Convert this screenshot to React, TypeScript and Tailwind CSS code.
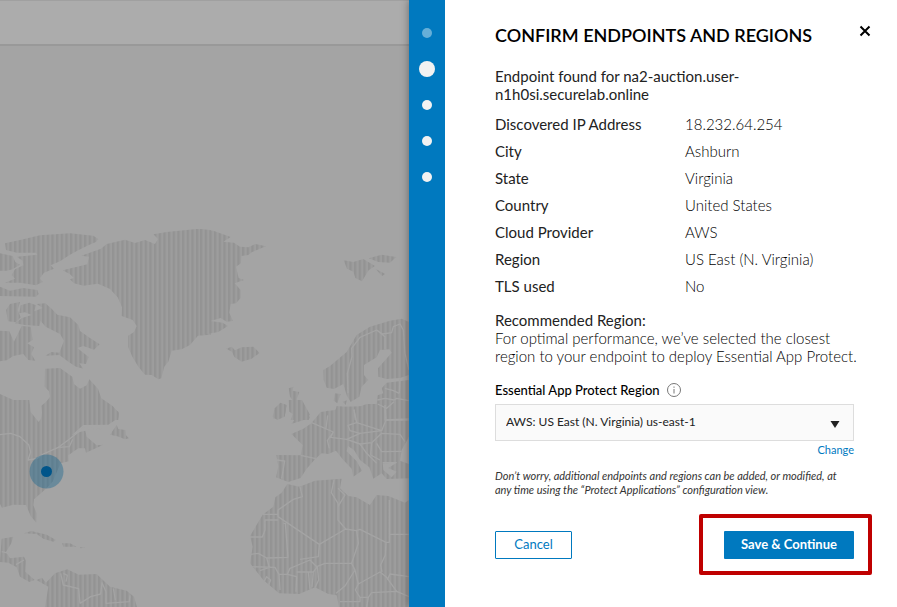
const details = [
  ["Discovered IP Address", "18.232.64.254"],
  ["City", "Ashburn"],
  ["State", "Virginia"],
  ["Country", "United States"],
  ["Cloud Provider", "AWS"],
  ["Region", "US East (N. Virginia)"],
  ["TLS used", "No"],
];

const land = {
  northWest: [
    // Arctic islands
    "M15 70 L60 60 L120 46 L210 40 L280 47 L295 57 L288 66 L265 76 L232 92 L210 104 L180 124 L152 136 L162 146 L132 158 L120 175 L128 186 L108 196 L60 188 L15 188 L45 176 L35 165 L45 148 L70 136 L68 122 L50 110 L112 104 L108 98 L50 98 L18 90Z",
    "M0 100 L38 108 L46 126 L60 134 L38 148 L20 152 L0 152Z",
    "M188 151 L262 133 L267 110 L244 107 L303 86 L320 72 L375 59 L405 69 L435 60 L465 72 L474 57 L460 43 L500 36 L590 27 L632 30 L632 344 L594 347 L570 375 L545 388 L515 392 L505 425 L493 440 L484 475 L475 478 L455 465 L435 464 L415 440 L397 410 L384 380 L384 347 L402 336 L410 318 L398 300 L365 288 L366 262 L353 232 L330 207 L294 191 L250 197 L222 190 L210 178 L222 174 L210 163Z",
    "M0 200 L30 212 L70 204 L112 210 L116 222 L108 230 L0 228Z",
    "M18 270 L30 252 L60 246 L53 270 L62 292 L48 307 L24 304Z",
    "M62 256 L88 248 L108 256 L103 274 L128 264 L110 252 L136 250 L155 266 L172 284 L210 292 L235 315 L240 333 L270 354 L299 373 L282 389 L250 378 L232 384 L266 411 L258 432 L238 430 L250 446 L228 440 L205 425 L178 405 L136 407 L154 396 L178 398 L192 362 L180 342 L137 320 L122 303 L118 318 L75 315 L45 310 L66 294 L95 285 L75 277 L58 280Z",
    "M0 332 L28 334 L42 365 L65 318 L92 320 L98 360 L82 370 L102 382 L94 402 L106 422 L85 420 L70 402 L40 408 L20 421 L0 424Z",
    "M135 446 L180 444 L217 470 L222 492 L240 506 L260 496 L268 478 L294 506 L304 535 L338 558 L357 580 L355 600 L123 600 L128 560 L150 530 L147 514 L134 500Z",
    "M0 522 L40 540 L88 552 L90 580 L105 600 L0 600Z",
  ],
  northEast: [
    "M0 27 L40 32 L92 51 L70 65 L102 68 L120 80 L145 82 L166 72 L198 79 L155 97 L145 105 L124 108 L123 130 L108 140 L116 174 L132 180 L104 190 L122 210 L122 234 L108 250 L92 252 L88 278 L99 303 L80 305 L62 294 L32 303 L68 308 L84 318 L55 336 L0 346Z",
    "M78 386 L95 380 L105 391 L125 382 L160 380 L179 399 L155 416 L125 425 L103 411 L96 395Z",
    "M431 121 L460 126 L490 117 L525 138 L506 151 L486 184 L466 174 L460 155 L441 146Z",
    "M506 115 L545 104 L589 111 L570 128 L535 126Z M526 146 L556 162 L546 168Z",
    "M370 450 L390 438 L440 396 L470 345 L510 320 L570 302 L605 296 L627 306 L627 465 L600 474 L560 477 L535 470 L534 445 L575 398 L568 388 L540 390 L530 412 L492 435 L492 465 L505 480 L485 500 L478 530 L452 546 L440 526 L430 492 L402 507 L380 503 L371 480Z",
    "M405 520 L422 522 L412 550 L401 542Z M428 545 L441 541 L437 555Z",
    "M266 505 L280 500 L278 512 L298 516 L290 538 L308 560 L330 592 L326 600 L272 600 L280 577 L290 574 L285 550 L270 530Z",
    "M224 565 L242 548 L260 555 L254 590 L232 600 L218 590Z",
    "M360 600 L382 572 L405 575 L410 558 L465 565 L500 552 L530 552 L533 526 L550 520 L545 505 L560 488 L627 480 L627 600Z",
  ],
  southWest: [
    "M0 0 L88 0 L92 36 L116 66 L128 48 L123 18 L145 0 L306 0 L356 36 L355 54 L325 74 L250 75 L215 106 L240 96 L256 92 L260 110 L290 136 L310 134 L258 158 L255 145 L235 145 L205 166 L206 184 L182 190 L158 245 L140 265 L102 298 L100 316 L110 340 L109 368 L92 348 L78 315 L40 314 L6 323 L0 312Z",
    "M330 104 L350 75 L355 87 L376 90 L378 106 L387 115 L375 118 L352 109Z",
    "M72 400 L94 393 L140 404 L168 420 L160 425 L130 416 L110 402Z M186 430 L210 430 L230 440 L190 440Z M240 441 L256 443 L242 445Z M133 441 L146 444Z",
    "M5 416 L40 410 L34 430 L18 456 L30 475 L72 470 L78 482 L76 515 L104 540 L88 546 L60 530 L50 502 L25 488 L0 486Z",
    "M109 540 L126 533 L138 548 L165 520 L202 508 L236 524 L290 522 L330 560 L380 572 L402 590 L411 621 L135 621 L145 560Z",
  ],
  southEast: [
    "M266 0 L306 0 L330 44 L318 58 L274 72 L290 50 L268 35Z M224 28 L240 10 L260 16 L254 48 L220 56Z",
    "M274 102 L310 86 L334 70 L362 36 L405 30 L420 20 L530 18 L540 0 L627 0 L627 110 L605 150 L600 182 L627 192 L627 235 L560 237 L545 220 L520 236 L508 202 L480 180 L462 150 L444 138 L440 154 L470 184 L486 212 L460 230 L455 206 L430 180 L408 152 L385 162 L365 160 L345 178 L320 206 L302 234 L265 246 L228 232 L235 200 L229 165 L302 166 L308 135Z",
    "M262 252 L298 260 L345 242 L425 236 L420 265 L445 288 L470 292 L510 315 L530 285 L565 288 L615 308 L627 300 L627 621 L417 621 L410 586 L385 582 L345 562 L298 582 L237 580 L190 540 L150 490 L158 440 L150 408 L188 344 L220 320 L226 292 L245 278Z",
  ],
};

const borders = {
  northEast:
    "M444 520 L442 460 L456 410 L455 385 L480 352 L530 330 L555 350 L555 388 M530 330 L548 342 L575 338 L580 320 L600 312 L610 330 L615 400 L627 450 M555 505 L580 512 L598 520 M532 540 L555 535 L582 540 L590 535 L627 542 M533 552 L560 565 L582 545 M462 568 L466 600 M555 565 L555 600 L627 597 M600 475 L598 520",
  southWest:
    "M0 104 L32 100 L60 110 L86 134 L92 156 L84 180 L110 176 L130 162 L175 142 L205 120 L250 84 L305 88 M175 142 L208 140 L218 118 M182 520 L190 555 L236 566 L240 610 M190 520 L202 526 L198 545 M240 610 L272 590 L302 582 L306 548 L318 575 L318 610 L388 605 L390 586 M340 565 L346 600 M5 455 L28 460 M48 494 L72 480",
  southEast:
    "M302 166 L348 176 M229 180 L254 183 L245 236 M335 68 L400 96 L392 112 L440 118 L480 100 L545 92 L558 60 L627 60 M462 30 L470 68 L545 92 M383 46 L378 85 M470 68 L444 76 L450 92 L480 100 M400 96 L382 122 L388 145 M440 118 L480 132 L515 128 L545 100 L600 103 L615 125 M515 128 L512 165 L540 180 M530 130 L545 155 L605 154 M480 132 L500 160 L530 190 M555 15 L558 60 M548 188 L590 188 M300 260 L307 290 L280 298 L234 330 L234 350 L358 433 L437 387 L414 360 L414 310 L394 278 L402 240 M437 387 L468 392 L480 388 L558 427 L568 427 L568 300 M568 403 L627 403 M188 343 L234 343 M234 360 L195 360 L195 390 L187 411 L150 411 M250 370 L256 370 L264 472 L200 474 L175 460 L152 463 M414 265 L435 285 L414 320 M470 392 L475 430 L455 490 L375 490 L350 500 L330 480 L270 505 L262 523 L237 523 L225 502 L150 500 M358 433 L355 470 L300 478 M200 474 L208 502 L180 512 M237 523 L240 570 M262 523 L290 530 L288 575 M290 516 L340 516 L352 500 M325 516 L330 568 M340 516 L336 562 M352 500 L356 540 L345 562 M455 490 L465 510 L435 558 L408 580 M465 510 L475 552 L540 516 L558 530 L590 574 L627 590 M558 427 L556 465 L542 495 L546 516 M562 540 L570 522 L627 530 M475 552 L466 570 L480 592 L505 592 L515 578 L590 574 M420 605 L480 605 L480 592 M192 545 L200 530 L212 540 L206 554 M505 592 L500 621",
};

function WorldMap() {
  return (
    <svg viewBox="0 46 409 561" className="block w-full" role="img" aria-label="Map of endpoint locations">
      <defs>
        <pattern id="stripes" width="14" height="14" patternUnits="userSpaceOnUse">
          <rect width="14" height="14" fill="#9d9d9d" />
          <rect width="7" height="14" fill="#939393" />
        </pattern>
      </defs>
      <g fill="url(#stripes)" stroke="none">
        <g transform="translate(0 220) scale(0.33333)">{land.northWest.map((d) => <path key={d} d={d} />)}</g>
        <g transform="translate(200 220) scale(0.33333)">{land.northEast.map((d) => <path key={d} d={d} />)}</g>
        <g transform="translate(0 400) scale(0.33333)">{land.southWest.map((d) => <path key={d} d={d} />)}</g>
        <g transform="translate(200 400) scale(0.33333)">{land.southEast.map((d) => <path key={d} d={d} />)}</g>
      </g>
      <path transform="translate(200 400) scale(0.33333)" fill="#a4a4a4" d="M548 190 L590 188 L565 204 L590 215 L575 232 L550 210Z" />
      <g fill="none" stroke="#a4a4a4" strokeWidth="4" strokeLinejoin="round">
        <path transform="translate(200 220) scale(0.33333)" d={borders.northEast} />
        <path transform="translate(0 400) scale(0.33333)" d={borders.southWest} />
        <path transform="translate(200 400) scale(0.33333)" d={borders.southEast} />
      </g>
      <circle cx="46.500" cy="471.500" r="17" fill="#005b8c" fillOpacity="0.35" />
      <circle cx="46.500" cy="471.500" r="5.500" fill="#00558a" />
    </svg>
  );
}

function Steps() {
  return (
    <ol className="flex w-9 shrink-0 flex-col items-center bg-[#0079bf] pt-[15px] shadow-[0_0_8px_rgba(0,0,0,0.4)]">
      {["size-[10px] bg-[#66afd8]", "size-4 bg-[#f2f2f2]", "size-[10px] bg-[#f2f2f2]", "size-[10px] bg-[#f2f2f2]", "size-[10px] bg-[#f2f2f2]"].map(
        (dot, i) => (
          <li key={i} className="flex h-9 items-center">
            <span className={`rounded-full ${dot}`} />
          </li>
        ),
      )}
    </ol>
  );
}

export default function App() {
  return (
    <div className="flex min-h-screen bg-white font-['Lato','Liberation_Sans',sans-serif] text-[15px] leading-[18px] text-[#222]">
      <main className="min-w-0 flex-1 overflow-hidden bg-[#a4a4a4]">
        <header className="h-[46px] border-t border-b-2 border-t-[#a0a0a0] border-b-[#999] bg-[#acacac]" />
        <WorldMap />
      </main>
      <Steps />
      <aside className="relative w-[452px] shrink-0 bg-white pt-6 pr-[43px] pl-[50px]">
        <div className="flex items-start justify-between">
          <h1 className="text-[18px] leading-[22px] font-semibold whitespace-nowrap text-black">CONFIRM ENDPOINTS AND REGIONS</h1>
          <button type="button" aria-label="Close" className="-mr-[19px] px-0.5 py-px text-black">
            <svg viewBox="0 0 12 12" className="size-3" fill="none" stroke="currentColor" strokeWidth="2">
              <path d="M1.500 1.500 L10.500 10.500 M10.500 1.500 L1.500 10.500" />
            </svg>
          </button>
        </div>
        <p className="mt-[21px] w-[260px]">Endpoint found for na2-auction.user-n1h0si.securelab.online</p>
        <dl className="mt-2 grid grid-cols-[190px_1fr] leading-[27px]">
          {details.map(([name, value]) => (
            <div key={name} className="contents">
              <dt>{name}</dt>
              <dd className="font-light text-black">{value}</dd>
            </div>
          ))}
        </dl>
        <section className="mt-[11px] -mr-4">
          <h2>Recommended Region:</h2>
          <p className="font-light text-black">
            For optimal performance, we’ve selected the closest
            <br />
            region to your endpoint to deploy Essential App Protect.
          </p>
        </section>
        <div className="mt-4 flex items-center gap-[7px]">
          <label htmlFor="region" className="text-[13px] font-medium text-black">Essential App Protect Region</label>
          <svg viewBox="0 0 14 14" className="size-[14px]" fill="none" stroke="#777">
            <circle cx="7" cy="7" r="6.500" />
            <path d="M7 6 V10.500 M7 3.500 V4.800" />
          </svg>
        </div>
        <div className="relative mt-[5px]">
          <select id="region" className="block h-[37px] w-full appearance-none border border-[#ddd] bg-[#fafafa] px-[10px] pb-0.5 text-[12px] text-[#222]">
            <option>AWS: US East (N. Virginia) us-east-1</option>
          </select>
          <svg viewBox="0 0 10 7" className="pointer-events-none absolute top-[17px] right-[14px] h-[7px] w-[10px]" fill="#222">
            <path d="M0.500 0 H9.500 L5 7Z" />
          </svg>
        </div>
        <div className="flex justify-end">
          <a href="#change" className="text-[11px] text-[#0079bf]">Change</a>
        </div>
        <p className="mt-[10px] text-[11px] leading-[14px] whitespace-nowrap text-[#333] italic">
          Don’t worry, additional endpoints and regions can be added, or modified, at
          <br />
          any time using the “Protect Applications” configuration view.
        </p>
        <div className="mt-[34px] flex justify-between text-[13px]">
          <button type="button" className="h-7 w-[77px] rounded-[1px] border border-[#0079bf] pb-0.5 text-[#0079bf]">Cancel</button>
          <div className="relative">
            <button type="button" className="h-7 w-[130px] rounded-[1px] bg-[#0079bf] pb-0.5 font-bold text-white">Save &amp; Continue</button>
            <div className="pointer-events-none absolute -top-[17px] -right-[18px] -bottom-4 -left-[25px] rounded-[2px] border-4 border-[#bf0000]" />
          </div>
        </div>
      </aside>
    </div>
  );
}
